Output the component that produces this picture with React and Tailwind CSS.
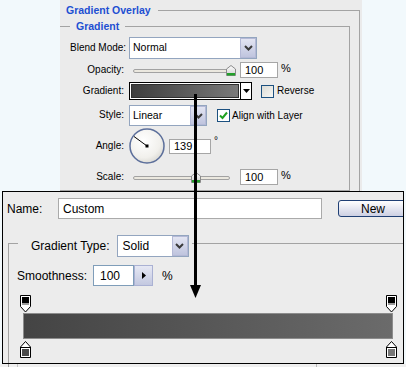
import React from "react";

function Chevron() {
  return (
    <svg width="9" height="6" viewBox="0 0 9 6">
      <path d="M1 1 L4.5 4.5 L8 1" stroke="#3a3a3a" strokeWidth="2" fill="none" />
    </svg>
  );
}

function Thumb() {
  return (
    <svg width="10" height="11" viewBox="0 0 10 11">
      <defs>
        <linearGradient id="tg" x1="0" y1="0" x2="0" y2="1">
          <stop offset="0" stopColor="#ffffff" />
          <stop offset="1" stopColor="#cfcfcf" />
        </linearGradient>
      </defs>
      <path d="M0.5 4 L5 0.5 L9.5 4 V10.5 H0.5 Z" fill="url(#tg)" stroke="#8a8a8a" />
      <rect x="1" y="8" width="8" height="2.5" fill="#22a02a" />
    </svg>
  );
}

function Slider({ thumbClass }) {
  return (
    <div className="relative ml-[5px] h-[16px] w-[109px] shrink-0">
      <div className="absolute left-[4px] top-[7px] h-[4px] w-[97px] rounded-full border border-[#a2a2a2] bg-[#ebe8df]" />
      <div className={"absolute top-[3px] " + thumbClass}>
        <Thumb />
      </div>
    </div>
  );
}

function SmallInput({ children, w = "w-[38px]", h = "h-[16px]" }) {
  return (
    <div className={"flex shrink-0 items-center border border-[#a6a6a6] bg-white pl-[4px] text-[11px] " + w + " " + h}>
      {children}
    </div>
  );
}

function TopStop() {
  return (
    <svg width="11" height="18" viewBox="0 0 11 18">
      <path d="M0.5 0.5 H10.5 V11.5 L5.5 17 L0.5 11.5 Z" fill="#ffffff" stroke="#000" />
      <rect x="2" y="2" width="7" height="6" fill="#000" />
      <rect x="2" y="8" width="7" height="2" fill="#9a9a9a" />
    </svg>
  );
}

function BottomStop({ fill }) {
  return (
    <svg width="11" height="17" viewBox="0 0 11 17">
      <path d="M5.5 0.5 L10.5 6 V16.5 H0.5 V6 Z" fill="#ffffff" stroke="#000" />
      <line x1="0.5" y1="6.5" x2="10.5" y2="6.5" stroke="#000" />
      <rect x="2" y="8" width="7" height="7" fill={fill} />
    </svg>
  );
}

export default function App() {
  return (
    <div className="relative flex h-[367px] w-[406px] flex-col overflow-hidden bg-[#f2f9fc] font-['Liberation_Sans',Arial,sans-serif] text-black">
      {/* Upper panel: Gradient Overlay */}
      <div className="ml-[60px] h-[200px] w-[302px] shrink-0 bg-[#ebebeb] text-[10px]">
        <fieldset className="mt-[3px] h-[197px] w-[300px] border-t border-r border-[#a3a3a3]">
          <legend className="pl-[6px] pr-[7px] text-[10.5px] font-bold leading-[14px] text-[#1d4fd2]">
            Gradient Overlay
          </legend>
          <fieldset className="mt-[2px] w-[290px] border-t border-r border-b border-[#a3a3a3] pb-[5px] pl-[10px]">
            <legend className="px-[6px] text-[10.5px] font-bold leading-[14px] text-[#1d4fd2]">Gradient</legend>

            {/* Blend Mode */}
            <div className="mt-[4px] flex h-[22px] items-center">
              <div className="w-[54px] shrink-0 whitespace-nowrap pb-[2px] text-right">Blend Mode:</div>
              <div className="ml-[5px] flex h-[22px] w-[128px] shrink-0 border border-[#93a5bf] bg-white">
                <div className="flex flex-1 items-center pl-[3px] text-[10.5px]">Normal</div>
                <div className="flex w-[16px] items-center justify-center border border-[#b4b9d6] bg-gradient-to-b from-[#e3e5f2] to-[#bfc4de]">
                  <Chevron />
                </div>
              </div>
            </div>

            {/* Opacity */}
            <div className="mt-[3px] flex h-[16px] items-center">
              <div className="w-[54px] shrink-0 pb-[2px] text-right">Opacity:</div>
              <Slider thumbClass="left-[97px]" />
              <div className="ml-[2px]">
                <SmallInput>100</SmallInput>
              </div>
              <div className="ml-[3px] pb-[3px] text-[11px]">%</div>
            </div>

            {/* Gradient */}
            <div className="mt-[4px] flex h-[18px] items-center">
              <div className="w-[54px] shrink-0 pb-[2px] text-right">Gradient:</div>
              <div className="ml-[5px] flex h-[18px] w-[123px] shrink-0 border border-black bg-white">
                <div className="m-[1px] flex-1 border border-[#2e2e2e] bg-gradient-to-r from-[#3e3e3e] to-[#7a7a7a]" />
                <div className="flex w-[11px] items-center justify-center border-l border-black">
                  <svg width="7" height="4" viewBox="0 0 7 4">
                    <path d="M0 0 H7 L3.5 4 Z" fill="#000" />
                  </svg>
                </div>
              </div>
              <div className="ml-[9px] h-[13px] w-[13px] shrink-0 border border-[#1c5180] bg-gradient-to-br from-[#dcdcd6] to-[#f7f7f4]" />
              <div className="ml-[3px] pb-[1px]">Reverse</div>
            </div>

            {/* Style */}
            <div className="mt-[5px] flex h-[21px] items-center">
              <div className="w-[54px] shrink-0 pb-[2px] text-right">Style:</div>
              <div className="ml-[5px] flex h-[21px] w-[78px] shrink-0 border border-[#93a5bf] bg-white">
                <div className="flex flex-1 items-center pl-[3px] text-[10.5px]">Linear</div>
                <div className="flex w-[16px] items-center justify-center border border-[#b4b9d6] bg-gradient-to-b from-[#e3e5f2] to-[#bfc4de]">
                  <Chevron />
                </div>
              </div>
              <div className="ml-[10px] flex h-[13px] w-[13px] shrink-0 items-center justify-center border border-[#1c5180] bg-white">
                <svg width="11" height="11" viewBox="0 0 11 11">
                  <path d="M2 5.5 L4.5 8 L9 2.5" stroke="#21a121" strokeWidth="2" fill="none" />
                </svg>
              </div>
              <div className="ml-[2px] whitespace-nowrap pb-[1px]">Align with Layer</div>
            </div>

            {/* Angle */}
            <div className="mt-[2px] flex h-[36px] items-center">
              <div className="w-[54px] shrink-0 pb-[2px] text-right">Angle:</div>
              <svg className="ml-[5px] shrink-0" width="36" height="36" viewBox="0 0 36 36">
                <defs>
                  <radialGradient id="dial" cx="0.4" cy="0.35" r="0.7">
                    <stop offset="0" stopColor="#ffffff" />
                    <stop offset="0.7" stopColor="#f1f0ec" />
                    <stop offset="1" stopColor="#d9d8d2" />
                  </radialGradient>
                </defs>
                <circle cx="18" cy="18" r="17" fill="url(#dial)" stroke="#5c6f9b" strokeWidth="1.5" />
                <line x1="18" y1="18" x2="5" y2="8.5" stroke="#000" strokeWidth="1" />
                <rect x="16.5" y="16.5" width="3" height="3" fill="#000" />
              </svg>
              <div className="ml-[4px]">
                <SmallInput w="w-[42px]" h="h-[15px]">139</SmallInput>
              </div>
              <div className="ml-[3px] self-start pt-[5px] text-[10px]">°</div>
            </div>

            {/* Scale */}
            <div className="mt-[5px] flex h-[16px] items-center">
              <div className="w-[54px] shrink-0 pb-[2px] text-right">Scale:</div>
              <Slider thumbClass="left-[62px]" />
              <div className="ml-[2px]">
                <SmallInput>100</SmallInput>
              </div>
              <div className="ml-[3px] pb-[3px] text-[11px]">%</div>
            </div>
          </fieldset>
        </fieldset>
      </div>

      <div className="flex-1" />
      {/* strip below the dialog */}
      <div className="flex h-[3px] shrink-0 bg-[#efefef]">
        <div className="ml-[8px] w-px bg-[#9c9c9c]" />
        <div className="ml-[8px] w-px bg-[#c4c4c4]" />
        <div className="ml-[298px] w-px bg-[#b9b9b9]" />
      </div>

      {/* Gradient Editor dialog overlay */}
      <div className="absolute left-[2px] top-[191px] h-[173px] w-[402px] overflow-hidden border border-black bg-[#ececec] text-[12px]">
        <div className="mt-[6px] flex items-start pl-[4px]">
          <div className="flex h-[21px] w-[51px] shrink-0 items-center">Name:</div>
          <div className="flex h-[21px] w-[264px] shrink-0 items-center border border-[#aaaaaa] bg-white pl-[4px]">
            Custom
          </div>
          <div className="ml-[16px] mt-[2px] flex h-[17px] w-[70px] shrink-0 items-center justify-center rounded-[3px] border border-[#1f3f74] bg-gradient-to-b from-white to-[#cdd0e3]">
            New
          </div>
        </div>

        <div className="ml-[5px] mt-[24px] h-[150px] border-t border-l border-[#a3a3a3]">
          <div className="-mt-[9px] ml-[9px] flex w-fit items-center bg-[#ececec] pl-[13px] pr-[3px]">
            <span className="whitespace-nowrap">Gradient Type:</span>
            <div className="ml-[7px] flex h-[22px] w-[72px] shrink-0 border border-[#93a5bf] bg-white">
              <div className="flex flex-1 items-center pl-[5px]">Solid</div>
              <div className="flex w-[16px] items-center justify-center border border-[#b4b9d6] bg-gradient-to-b from-[#e3e5f2] to-[#bfc4de]">
                <Chevron />
              </div>
            </div>
          </div>

          <div className="ml-[8px] mt-[8px] flex h-[21px] items-center">
            <div className="w-[76px] shrink-0 whitespace-nowrap">Smoothness:</div>
            <div className="flex h-[21px] w-[41px] shrink-0 items-center border border-[#7f9db9] bg-white pl-[6px]">100</div>
            <div className="flex h-[21px] w-[19px] shrink-0 items-center justify-center border border-[#aab1d3] bg-gradient-to-b from-[#e6e8f4] to-[#c3c8e0]">
              <svg width="4" height="7" viewBox="0 0 4 7">
                <path d="M0 0 L4 3.5 L0 7 Z" fill="#000" />
              </svg>
            </div>
            <div className="ml-[9px]">%</div>
          </div>

          <div className="ml-[11px] mt-[9px] w-[377px]">
            <div className="flex h-[18px] justify-between">
              <TopStop />
              <TopStop />
            </div>
            <div className="ml-[3px] h-[26px] w-[370px] border border-[#8c8c8c] bg-gradient-to-r from-[#444444] to-[#6b6b6b]" />
            <div className="mt-[2px] flex h-[17px] justify-between">
              <BottomStop fill="#4a4a4a" />
              <BottomStop fill="#767676" />
            </div>
          </div>
        </div>
      </div>

      {/* Arrow from gradient swatch to editor */}
      <svg className="absolute left-[188px] top-[94px]" width="16" height="206" viewBox="0 0 16 206">
        <rect x="6" y="0" width="3" height="193" fill="#000" />
        <path d="M2 191 L13 191 L7.5 204 Z" fill="#000" />
      </svg>
    </div>
  );
}
